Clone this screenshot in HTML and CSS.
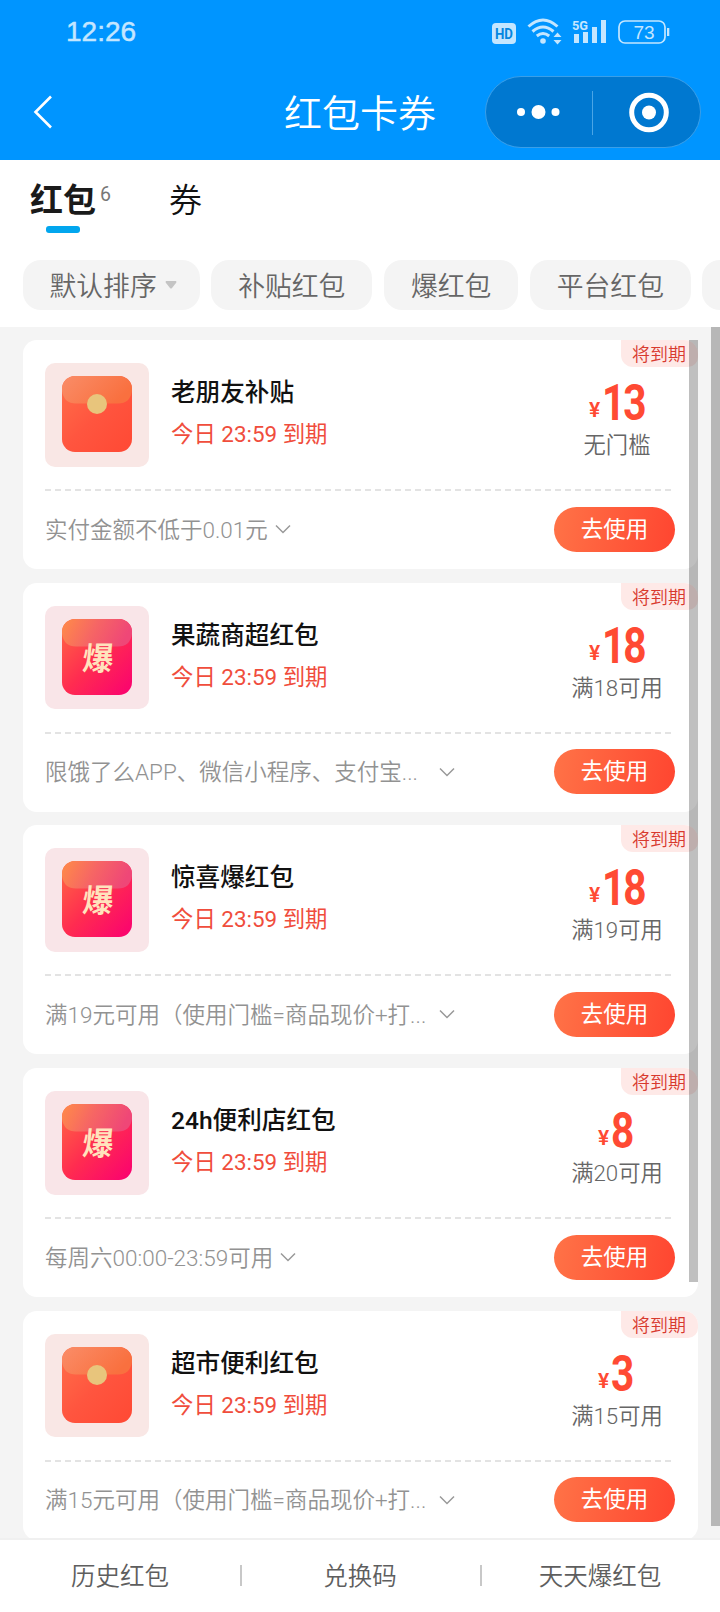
FILE: index.html
```html
<!DOCTYPE html>
<html lang="zh-CN">
<head>
<meta charset="utf-8">
<title>红包卡券</title>
<link rel="stylesheet" href="styles.css">
</head>
<body>
<svg class="defs" width="0" height="0" aria-hidden="true">
  <defs>
    <linearGradient id="red" x1="0" y1="0" x2="1" y2="1"><stop offset="0" stop-color="#ff704a"/><stop offset=".5" stop-color="#ff553f"/><stop offset="1" stop-color="#ff4934"/></linearGradient>
    <linearGradient id="redFlap" x1="0" y1="0" x2="1" y2=".4"><stop offset="0" stop-color="#fa8d68"/><stop offset="1" stop-color="#f9703f"/></linearGradient>
    <linearGradient id="pink" x1="0" y1="0" x2="1" y2="1"><stop offset="0" stop-color="#ff6a42"/><stop offset=".5" stop-color="#ff2c50"/><stop offset="1" stop-color="#fa0071"/></linearGradient>
    <linearGradient id="pinkFlap" x1="0" y1="0" x2="1" y2=".2"><stop offset="0" stop-color="#ff8c48"/><stop offset=".5" stop-color="#f66664"/><stop offset="1" stop-color="#ef4777"/></linearGradient>
    <symbol id="envelope" viewBox="0 0 70 76">
      <rect width="70" height="76" rx="13" fill="url(#red)"/>
      <path d="M0 13A13 13 0 0 1 13 0H57A13 13 0 0 1 70 13V15Q68 27.500 56 27.500H14Q2 27.500 0 15Z" fill="url(#redFlap)"/>
      <circle cx="35" cy="28" r="10" fill="#e8c57c"/>
    </symbol>
    <symbol id="burst" viewBox="0 0 70 76">
      <rect width="70" height="76" rx="13" fill="url(#pink)"/>
      <path d="M0 13A13 13 0 0 1 13 0H57A13 13 0 0 1 70 13V15Q68 27.500 56 27.500H14Q2 27.500 0 15Z" fill="url(#pinkFlap)"/>
      <text class="burst-char" transform="translate(35 51) skewX(-5) scale(.96 1)" text-anchor="middle">爆</text>
    </symbol>
    <symbol id="chevron" viewBox="0 0 16 10"><path d="M1 1.500L8 8.500L15 1.500" fill="none" stroke="#999" stroke-width="1.500"/></symbol>
  </defs>
</svg>
<div class="screen">
  <header class="header">
    <div class="status">
      <span class="clock">12:26</span>
      <svg class="status-icons" width="180" height="30" viewBox="0 0 180 30">
        <g fill="#c4e6ff">
          <rect x="2" y="8" width="24" height="21" rx="4"/>
          <text class="hd" x="14" y="24" text-anchor="middle" textLength="18" lengthAdjust="spacingAndGlyphs">HD</text>
          <circle cx="53" cy="26" r="2.800"/>
          <path d="M63.500 22L67.500 17.500L71.500 22ZM63.500 25L67.500 29.500L71.500 25Z"/>
          <text class="net" x="82" y="14.500" textLength="16" lengthAdjust="spacingAndGlyphs">5G</text>
          <path d="M84 19H89V28H84ZM93 17H98V28H93ZM102 12H107V28H102ZM111 5H116V28H111Z"/>
          <rect x="177" y="13" width="2.300" height="8"/>
          <text class="batt" x="154" y="23.500" text-anchor="middle">73</text>
        </g>
        <g fill="none" stroke="#c4e6ff">
          <path d="M38.500 11.500Q53-1.500 67.500 11.500M42.500 16.500Q53 7.500 63.500 16.500M46.800 21Q53 16 59.200 21" stroke-width="3"/>
          <rect x="129" y="6" width="46" height="22" rx="6" stroke-width="1.700"/>
        </g>
      </svg>
    </div>
    <div class="nav">
      <svg class="back" width="20" height="34" viewBox="0 0 20 34"><path d="M18 1.500L2.500 17L18 32.500" fill="none" stroke="#fff" stroke-width="2.600"/></svg>
      <h1 class="title">红包卡券</h1>
      <div class="capsule">
        <svg width="214" height="70" viewBox="0 0 214 70">
          <g fill="#fff"><circle cx="35" cy="35" r="4"/><circle cx="52.500" cy="35" r="7"/><circle cx="69.500" cy="35" r="4"/><circle cx="163" cy="35.500" r="7"/></g>
          <circle cx="163" cy="35.500" r="17.300" fill="none" stroke="#fff" stroke-width="5"/>
          <path d="M106.500 14V58" stroke="#4aa5e6"/>
        </svg>
      </div>
    </div>
  </header>

  <nav class="tabs">
    <div class="tab tab-active"><span>红包</span><span class="count">6</span></div>
    <div class="tab">券</div>
  </nav>
  <div class="filters">
    <div class="chip">默认排序<svg class="caret" width="12" height="8" viewBox="0 0 12 8"><path d="M1 0H11Q12 1 11 2L7 7Q6 8 5 7L1 2Q0 1 1 0Z" fill="#c4c4c4"/></svg></div>
    <div class="chip">补贴红包</div>
    <div class="chip">爆红包</div>
    <div class="chip">平台红包</div>
    <div class="chip chip-next"></div>
  </div>

  <main class="list">
    <article class="card">
      <div class="card-main">
        <div class="thumb"><svg width="70" height="76"><use href="#envelope"/></svg></div>
        <div class="info"><h2 class="name">老朋友补贴</h2><p class="expiry">今日 23:59 到期</p></div>
        <div class="value"><div class="price"><span class="yen">¥</span><span class="amount">13</span></div><div class="limit">无门槛</div></div>
      </div>
      <div class="card-foot">
        <div class="rule">实付金额不低于0.01元</div><svg class="chev" width="16" height="10"><use href="#chevron"/></svg>
        <button class="use">去使用</button>
      </div>
      <span class="badge">将到期</span>
    </article>
    <article class="card">
      <div class="card-main">
        <div class="thumb thumb-pink"><svg width="70" height="76"><use href="#burst"/></svg></div>
        <div class="info"><h2 class="name">果蔬商超红包</h2><p class="expiry">今日 23:59 到期</p></div>
        <div class="value"><div class="price"><span class="yen">¥</span><span class="amount">18</span></div><div class="limit">满18可用</div></div>
      </div>
      <div class="card-foot">
        <div class="rule rule-long">限饿了么APP、微信小程序、支付宝...</div><svg class="chev" width="16" height="10"><use href="#chevron"/></svg>
        <button class="use">去使用</button>
      </div>
      <span class="badge">将到期</span>
    </article>
    <article class="card">
      <div class="card-main">
        <div class="thumb thumb-pink"><svg width="70" height="76"><use href="#burst"/></svg></div>
        <div class="info"><h2 class="name">惊喜爆红包</h2><p class="expiry">今日 23:59 到期</p></div>
        <div class="value"><div class="price"><span class="yen">¥</span><span class="amount">18</span></div><div class="limit">满19可用</div></div>
      </div>
      <div class="card-foot">
        <div class="rule rule-long">满19元可用（使用门槛=商品现价+打...</div><svg class="chev" width="16" height="10"><use href="#chevron"/></svg>
        <button class="use">去使用</button>
      </div>
      <span class="badge">将到期</span>
    </article>
    <article class="card">
      <div class="card-main">
        <div class="thumb thumb-pink"><svg width="70" height="76"><use href="#burst"/></svg></div>
        <div class="info"><h2 class="name">24h便利店红包</h2><p class="expiry">今日 23:59 到期</p></div>
        <div class="value"><div class="price"><span class="yen">¥</span><span class="amount amount-one">8</span></div><div class="limit">满20可用</div></div>
      </div>
      <div class="card-foot">
        <div class="rule">每周六00:00-23:59可用</div><svg class="chev" width="16" height="10"><use href="#chevron"/></svg>
        <button class="use">去使用</button>
      </div>
      <span class="badge">将到期</span>
    </article>
    <article class="card">
      <div class="card-main">
        <div class="thumb"><svg width="70" height="76"><use href="#envelope"/></svg></div>
        <div class="info"><h2 class="name">超市便利红包</h2><p class="expiry">今日 23:59 到期</p></div>
        <div class="value"><div class="price"><span class="yen">¥</span><span class="amount amount-one">3</span></div><div class="limit">满15可用</div></div>
      </div>
      <div class="card-foot">
        <div class="rule rule-long">满15元可用（使用门槛=商品现价+打...</div><svg class="chev" width="16" height="10"><use href="#chevron"/></svg>
        <button class="use">去使用</button>
      </div>
      <span class="badge">将到期</span>
    </article>
    <div class="scroll scroll-inner"></div>
    <div class="scroll scroll-outer"></div>
  </main>

  <footer class="bottom">
    <div class="link">历史红包</div>
    <div class="link">兑换码</div>
    <div class="link">天天爆红包</div>
  </footer>
</div>
</body>
</html>
```

FILE: styles.css
```css
* { box-sizing: border-box; margin: 0; padding: 0; }
body {
  width: 720px;
  height: 1612px;
  overflow: hidden;
  font-family: Roboto, "Noto Sans CJK SC", sans-serif;
  font-weight: 350;
  background: #fff;
}
svg { display: block; flex: none; }
.defs { position: absolute; }
.screen { display: flex; flex-direction: column; height: 1612px; }

/* header */
.header { height: 160px; background: #0095ff; flex: none; }
.status { display: flex; justify-content: space-between; height: 76px; padding: 15px 50px 0 66px; }
.clock { font: 400 28px/34px "Liberation Sans", Inter, sans-serif; color: #c4e6ff; -webkit-text-stroke: .5px #c4e6ff; }
.hd { font: 700 15px Roboto, sans-serif; fill: #0586e0; }
.net { font: 700 13.5px Roboto, sans-serif; }
.batt { font: 400 19px "Liberation Sans", sans-serif; }
.nav { display: flex; align-items: center; height: 72px; padding: 0 19px 0 33px; }
.title { flex: 1; margin-left: 231px; padding-top: 4px; font-size: 38px; line-height: 68px; font-weight: 350; color: #fff; white-space: nowrap; }
.capsule { width: 216px; height: 72px; border: 1px solid #3b9fe8; border-radius: 36px; background: #0078d0; }

/* tabs and filters */
.tabs { display: flex; gap: 58px; height: 100px; padding: 17px 30px 0; flex: none; }
.tab { font-size: 33px; line-height: 48px; color: #111; height: 56px; }
.tab-active { position: relative; display: flex; font-weight: 700; color: #1a1a1a; }
.tab-active::after { content: ""; position: absolute; left: 16px; bottom: 0; width: 34px; height: 7px; border-radius: 3px; background: #02a6ee; }
.count { margin-left: 4px; font-size: 19.500px; line-height: 36px; font-weight: 400; color: #777; }
.filters { display: flex; gap: 11.500px; height: 67px; padding-left: 23px; overflow: hidden; flex: none; }
.chip { display: flex; align-items: center; height: 50px; padding: 0 27px 2px; border-radius: 18px; background: #f4f4f4; font-size: 26.800px; color: #666; white-space: nowrap; flex: none; }
.chip:first-child { padding: 0 23px 2px 26.500px; }
.chip-next { width: 160px; }
.caret { margin: 2px 0 0 8px; }

/* coupon list */
.list { position: relative; flex: 1; min-height: 0; overflow: hidden; display: flex; flex-direction: column; gap: 13.700px; padding: 13px 22px 0 23px; background: #f4f4f4; }
.card { position: relative; height: 229px; flex: none; padding: 0 23px 0 22px; border-radius: 14px; background: #fff; overflow: hidden; }
.card-main { display: flex; height: 151px; padding-top: 23px; background: repeating-linear-gradient(90deg, #e3e3e3 0 6px, transparent 6px 10px) 0 100% / 100% 2px no-repeat; }
.thumb { display: flex; justify-content: center; width: 104px; height: 103.500px; padding-top: 13px; border-radius: 10px; background: #f9e7e5; }
.thumb-pink { background: #f9e5e8; }
.burst-char { font: 700 32px "Noto Sans CJK SC", sans-serif; fill: #ffe3bd; }
.info { flex: 1; padding: 12px 0 0 22px; }
.name { font-size: 24.600px; line-height: 36px; font-weight: 500; color: #111; }
.expiry { margin-top: 7px; font-size: 22.400px; line-height: 32px; font-weight: 400; color: #f04d3c; }
.value { width: 116px; text-align: center; }
.price { display: flex; justify-content: center; align-items: baseline; height: 60px; padding-top: 11px; color: #ff4a33; }
.yen { position: relative; top: -3px; font-size: 21px; font-weight: 600; }
.amount { width: 43px; margin-left: 2px; font-size: 49.500px; line-height: 58px; font-weight: 700; transform: scaleX(.82); transform-origin: 0 50%; text-align: left; letter-spacing: -2.500px; }
.amount-one { width: 25px; }
.limit { margin-top: 6px; font-size: 22.300px; line-height: 32px; color: #666; white-space: nowrap; }
.card-foot { display: flex; align-items: center; height: 76px; }
.rule { padding-bottom: 3px; font-size: 22.500px; color: #929292; white-space: nowrap; }
.rule-long { width: 387px; }
.chev { margin-left: 7px; }
.use { width: 121px; height: 45px; margin-left: auto; border: 0; border-radius: 23px; background: linear-gradient(100deg, #ff7347, #ff4530); font: inherit; font-size: 22.500px; font-weight: 400; line-height: 45px; color: #fff; }
.badge { position: absolute; right: 0; top: 0; width: 77px; height: 27px; padding-left: 11px; border-radius: 0 0 10px 12px; background: #fee9e7; font-size: 18px; line-height: 30px; color: #d8392e; white-space: nowrap; }
.scroll { position: absolute; width: 9px; background: rgba(0, 0, 0, .25); }
.scroll-inner { left: 689px; top: 13px; height: 942px; }
.scroll-outer { left: 711px; top: 0; height: 1199px; }

/* bottom links */
.bottom { display: flex; height: 74px; border-top: 2px solid #f0f0f0; background: #fff; flex: none; }
.link { flex: 1; display: flex; justify-content: center; align-items: center; position: relative; padding-bottom: 4px; font-size: 24.500px; color: #5e5e5e; }
.link + .link::before { content: ""; position: absolute; left: 0; top: 25px; width: 1.500px; height: 21px; background: #c8c8c8; }
```
